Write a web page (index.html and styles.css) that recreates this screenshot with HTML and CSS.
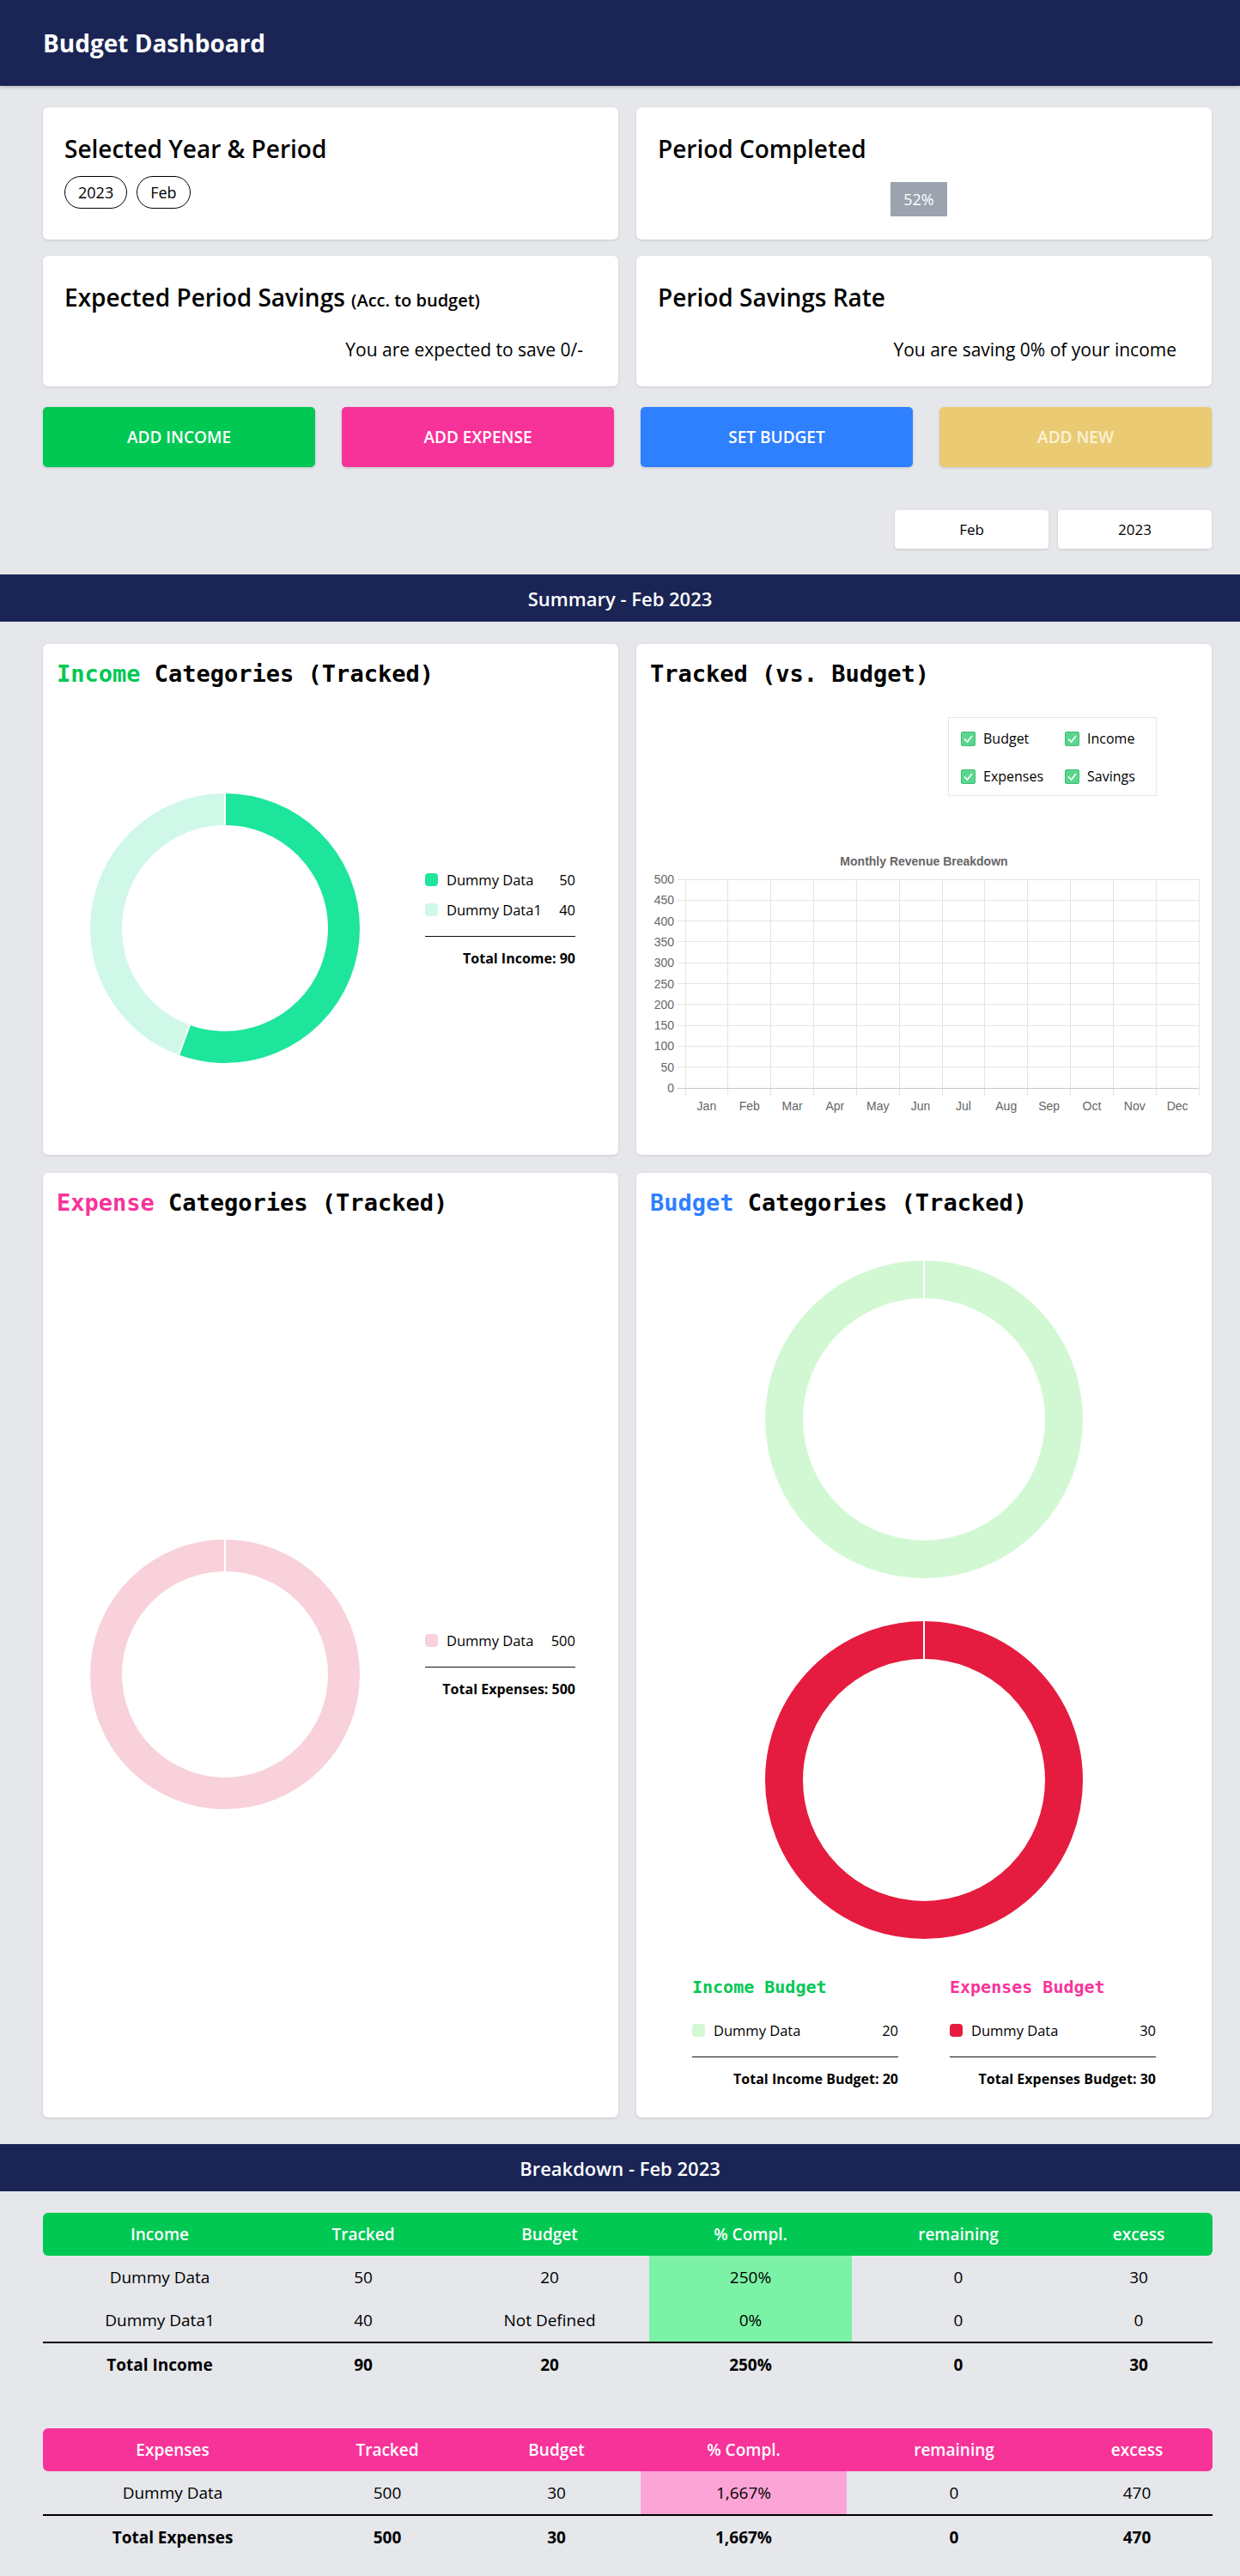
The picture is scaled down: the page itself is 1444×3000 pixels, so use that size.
FILE: index.html
```html
<!DOCTYPE html>
<html lang="en">
<head>
<meta charset="utf-8">
<title>Budget Dashboard</title>
<link rel="stylesheet" href="styles.css">
</head>
<body>
<header class="topbar"><h1>Budget Dashboard</h1></header>

<section class="overview">
  <div class="stat-grid">
    <div class="card stat stat-top">
      <h2 class="stat-title">Selected Year &amp; Period</h2>
      <div class="pills"><span class="pill">2023</span><span class="pill">Feb</span></div>
    </div>
    <div class="card stat stat-badge">
      <h2 class="stat-title">Period Completed</h2>
      <div class="badge-row"><span class="badge">52%</span></div>
    </div>
    <div class="card stat stat-bottom">
      <h2 class="stat-title">Expected Period Savings <small>(Acc. to budget)</small></h2>
      <p class="stat-text">You are expected to save 0/-</p>
    </div>
    <div class="card stat stat-bottom">
      <h2 class="stat-title">Period Savings Rate</h2>
      <p class="stat-text">You are saving 0% of your income</p>
    </div>
  </div>

  <div class="actions">
    <button class="btn btn-income">ADD INCOME</button>
    <button class="btn btn-expense">ADD EXPENSE</button>
    <button class="btn btn-budget">SET BUDGET</button>
    <button class="btn btn-new">ADD NEW</button>
  </div>

  <div class="period-select">
    <div class="select">Feb</div>
    <div class="select">2023</div>
  </div>
</section>

<div class="section-bar">Summary - Feb 2023</div>

<section class="charts">
  <div class="card chart-card">
    <h2 class="chart-title"><span class="c-income">Income</span> Categories (Tracked)</h2>
    <div class="donut-body">
      <svg class="donut" width="314" height="314" viewBox="0 0 314 314">
        <circle cx="157" cy="157" r="138.5" fill="none" stroke="#1de59b" stroke-width="37" stroke-dasharray="483.46 870.22" transform="rotate(-90 157 157)"/>
        <circle cx="157" cy="157" r="138.5" fill="none" stroke="#d0f8e9" stroke-width="37" stroke-dasharray="386.76 870.22" stroke-dashoffset="-483.46" transform="rotate(-90 157 157)"/>
        <line x1="157" y1="0" x2="157" y2="37" stroke="#fff" stroke-width="2"/>
        <line x1="115.96" y1="269.76" x2="103.3" y2="304.53" stroke="#fff" stroke-width="2"/>
      </svg>
      <div class="legend side-legend">
        <div class="legend-row"><span class="swatch sw-dark"></span><span class="legend-label">Dummy Data</span><span>50</span></div>
        <div class="legend-row"><span class="swatch sw-light"></span><span class="legend-label">Dummy Data1</span><span>40</span></div>
        <div class="legend-line"></div>
        <div class="legend-total">Total Income: 90</div>
      </div>
    </div>
  </div>

  <div class="card chart-card tracked-card">
    <h2 class="chart-title">Tracked (vs. Budget)</h2>
    <div class="check-legend">
      <div class="check-item"><span class="cb"><svg width="17" height="17" viewBox="0 0 17 17"><polyline points="4,8.5 7.5,12 13,5" fill="none" stroke="#fff" stroke-width="1.6"/></svg></span>Budget</div>
      <div class="check-item"><span class="cb"><svg width="17" height="17" viewBox="0 0 17 17"><polyline points="4,8.5 7.5,12 13,5" fill="none" stroke="#fff" stroke-width="1.6"/></svg></span>Income</div>
      <div class="check-item"><span class="cb"><svg width="17" height="17" viewBox="0 0 17 17"><polyline points="4,8.5 7.5,12 13,5" fill="none" stroke="#fff" stroke-width="1.6"/></svg></span>Expenses</div>
      <div class="check-item"><span class="cb"><svg width="17" height="17" viewBox="0 0 17 17"><polyline points="4,8.5 7.5,12 13,5" fill="none" stroke="#fff" stroke-width="1.6"/></svg></span>Savings</div>
    </div>
    <svg class="line-chart" width="645" height="310" viewBox="0 0 645 310">
      <text class="ch-title" x="319" y="18" text-anchor="middle">Monthly Revenue Breakdown</text>
      <g stroke="#e4e4e4" stroke-width="1" shape-rendering="crispEdges">
        <line x1="32" y1="34" x2="639" y2="34"/>
        <line x1="32" y1="58.3" x2="639" y2="58.3"/>
        <line x1="32" y1="82.6" x2="639" y2="82.6"/>
        <line x1="32" y1="106.9" x2="639" y2="106.9"/>
        <line x1="32" y1="131.2" x2="639" y2="131.2"/>
        <line x1="32" y1="155.5" x2="639" y2="155.5"/>
        <line x1="32" y1="179.8" x2="639" y2="179.8"/>
        <line x1="32" y1="204.1" x2="639" y2="204.1"/>
        <line x1="32" y1="228.4" x2="639" y2="228.4"/>
        <line x1="32" y1="252.7" x2="639" y2="252.7"/>
        <line x1="41" y1="34" x2="41" y2="286"/>
        <line x1="90.83" y1="34" x2="90.83" y2="286"/>
        <line x1="140.67" y1="34" x2="140.67" y2="286"/>
        <line x1="190.5" y1="34" x2="190.5" y2="286"/>
        <line x1="240.33" y1="34" x2="240.33" y2="286"/>
        <line x1="290.17" y1="34" x2="290.17" y2="286"/>
        <line x1="340" y1="34" x2="340" y2="286"/>
        <line x1="389.83" y1="34" x2="389.83" y2="286"/>
        <line x1="439.67" y1="34" x2="439.67" y2="286"/>
        <line x1="489.5" y1="34" x2="489.5" y2="286"/>
        <line x1="539.33" y1="34" x2="539.33" y2="286"/>
        <line x1="589.17" y1="34" x2="589.17" y2="286"/>
        <line x1="639" y1="34" x2="639" y2="286"/>
      </g>
      <line x1="32" y1="277" x2="639" y2="277" stroke="#c8c8c8" stroke-width="1" shape-rendering="crispEdges"/>
      <g class="ch-tick" text-anchor="end">
        <text x="28" y="39">500</text>
        <text x="28" y="63.3">450</text>
        <text x="28" y="87.6">400</text>
        <text x="28" y="111.9">350</text>
        <text x="28" y="136.2">300</text>
        <text x="28" y="160.5">250</text>
        <text x="28" y="184.8">200</text>
        <text x="28" y="209.1">150</text>
        <text x="28" y="233.4">100</text>
        <text x="28" y="257.7">50</text>
        <text x="28" y="282">0</text>
      </g>
      <g class="ch-tick" text-anchor="middle">
        <text x="65.9" y="303">Jan</text>
        <text x="115.75" y="303">Feb</text>
        <text x="165.6" y="303">Mar</text>
        <text x="215.4" y="303">Apr</text>
        <text x="265.25" y="303">May</text>
        <text x="315.1" y="303">Jun</text>
        <text x="364.9" y="303">Jul</text>
        <text x="414.75" y="303">Aug</text>
        <text x="464.6" y="303">Sep</text>
        <text x="514.4" y="303">Oct</text>
        <text x="564.25" y="303">Nov</text>
        <text x="614.1" y="303">Dec</text>
      </g>
    </svg>
  </div>

  <div class="card chart-card">
    <h2 class="chart-title"><span class="c-expense">Expense</span> Categories (Tracked)</h2>
    <div class="donut-body">
      <svg class="donut" width="314" height="314" viewBox="0 0 314 314">
        <circle cx="157" cy="157" r="138.5" fill="none" stroke="#f9d1db" stroke-width="37"/>
        <line x1="157" y1="0" x2="157" y2="37" stroke="#fff" stroke-width="2"/>
      </svg>
      <div class="legend side-legend">
        <div class="legend-row"><span class="swatch sw-pink"></span><span class="legend-label">Dummy Data</span><span>500</span></div>
        <div class="legend-line"></div>
        <div class="legend-total">Total Expenses: 500</div>
      </div>
    </div>
  </div>

  <div class="card chart-card budget-card">
    <h2 class="chart-title"><span class="c-budget">Budget</span> Categories (Tracked)</h2>
    <div class="budget-donuts">
      <svg class="donut" width="370" height="370" viewBox="0 0 370 370">
        <circle cx="185" cy="185" r="163" fill="none" stroke="#d2f8d3" stroke-width="44"/>
        <line x1="185" y1="0" x2="185" y2="44" stroke="#fff" stroke-width="2"/>
      </svg>
      <svg class="donut" width="370" height="370" viewBox="0 0 370 370">
        <circle cx="185" cy="185" r="163" fill="none" stroke="#e51b3f" stroke-width="44"/>
        <line x1="185" y1="0" x2="185" y2="44" stroke="#fff" stroke-width="2"/>
      </svg>
    </div>
    <div class="budget-legends">
      <div class="legend">
        <h3 class="legend-title c-income">Income Budget</h3>
        <div class="legend-row"><span class="swatch sw-mint"></span><span class="legend-label">Dummy Data</span><span>20</span></div>
        <div class="legend-line"></div>
        <div class="legend-total">Total Income Budget: 20</div>
      </div>
      <div class="legend">
        <h3 class="legend-title c-expense">Expenses Budget</h3>
        <div class="legend-row"><span class="swatch sw-red"></span><span class="legend-label">Dummy Data</span><span>30</span></div>
        <div class="legend-line"></div>
        <div class="legend-total">Total Expenses Budget: 30</div>
      </div>
    </div>
  </div>
</section>

<div class="section-bar">Breakdown - Feb 2023</div>

<section class="tables">
  <table class="tbl tbl-income">
    <colgroup><col class="c1"><col class="c2"><col class="c3"><col class="c4"><col class="c5"><col class="c6"></colgroup>
    <thead>
      <tr><th>Income</th><th>Tracked</th><th>Budget</th><th>% Compl.</th><th>remaining</th><th>excess</th></tr>
    </thead>
    <tbody>
      <tr><td>Dummy Data</td><td>50</td><td>20</td><td class="hl">250%</td><td>0</td><td>30</td></tr>
      <tr><td>Dummy Data1</td><td>40</td><td>Not Defined</td><td class="hl">0%</td><td>0</td><td>0</td></tr>
      <tr class="total"><td>Total Income</td><td>90</td><td>20</td><td>250%</td><td>0</td><td>30</td></tr>
    </tbody>
  </table>

  <table class="tbl tbl-expense">
    <colgroup><col class="c1"><col class="c2"><col class="c3"><col class="c4"><col class="c5"><col class="c6"></colgroup>
    <thead>
      <tr><th>Expenses</th><th>Tracked</th><th>Budget</th><th>% Compl.</th><th>remaining</th><th>excess</th></tr>
    </thead>
    <tbody>
      <tr><td>Dummy Data</td><td>500</td><td>30</td><td class="hl">1,667%</td><td>0</td><td>470</td></tr>
      <tr class="total"><td>Total Expenses</td><td>500</td><td>30</td><td>1,667%</td><td>0</td><td>470</td></tr>
    </tbody>
  </table>
</section>
</body>
</html>
```

FILE: styles.css
```css
* { box-sizing: border-box; }
html, body { margin: 0; padding: 0; }
body {
  background: #e5e7eb;
  font-family: "Open Sans", "Noto Sans", sans-serif;
  color: #000;
}

/* header */
.topbar {
  height: 100px;
  background: #1a2555;
  display: flex;
  align-items: center;
  padding-left: 50px;
  box-shadow: 0 2px 4px rgba(0, 0, 0, 0.18);
}
.topbar h1 {
  margin: 0;
  color: #fff;
  font-size: 28px;
  font-weight: 700;
}

/* overview */
.overview { padding: 25px 33px 30px 50px; }
.stat-grid {
  display: grid;
  grid-template-columns: minmax(0, 1fr) minmax(0, 1fr);
  gap: 19px 21px;
  align-items: start;
}
.card {
  background: #fff;
  border-radius: 6px;
  box-shadow: 0 1px 3px rgba(0, 0, 0, 0.13);
}
.stat { padding: 30px 25px 0; }
.stat-top { padding-bottom: 36px; }
.stat-badge { padding-bottom: 27px; height: 154px; }
.stat-bottom { padding-bottom: 29px; height: 152px; }
.stat-title {
  margin: 0;
  font-size: 28px;
  line-height: 36px;
  height: 36px;
  font-weight: 600;
}
.stat-title small { font-size: 20px; font-weight: 600; line-height: 1; }
.pills { display: flex; gap: 11px; margin-top: 14px; }
.pill {
  height: 38px;
  padding: 0 15px;
  border: 1px solid #000;
  border-radius: 19px;
  display: flex;
  align-items: center;
  font-size: 18px;
}
.badge-row { display: flex; justify-content: center; margin-top: 21px; padding-right: 12px; }
.badge {
  height: 40px;
  padding: 0 15px;
  background: #9ca3af;
  color: #fff;
  display: flex;
  align-items: center;
  font-size: 18px;
}
.stat-text {
  margin: 29px 0 0;
  padding-right: 16px;
  text-align: right;
  font-size: 21px;
  line-height: 28px;
}

.actions {
  display: grid;
  grid-template-columns: repeat(4, minmax(0, 1fr));
  gap: 31px;
  margin-top: 24px;
}
.btn {
  height: 70px;
  border: none;
  border-radius: 5px;
  font-family: inherit;
  font-size: 19px;
  font-weight: 600;
  color: #fff;
  box-shadow: 0 1px 3px rgba(0, 0, 0, 0.15);
}
.btn-income { background: #00c853; }
.btn-expense { background: #f7339a; }
.btn-budget { background: #2f80ff; }
.btn-new { background: #eacb74; color: #fbf2d6; }

.period-select {
  display: flex;
  justify-content: flex-end;
  gap: 11px;
  margin-top: 50px;
}
.select {
  width: 179px;
  height: 45px;
  background: #fff;
  border-radius: 4px;
  box-shadow: 0 1px 3px rgba(0, 0, 0, 0.13);
  display: flex;
  align-items: center;
  justify-content: center;
  font-size: 17px;
}

.section-bar {
  height: 55px;
  background: #1a2555;
  color: #fff;
  display: flex;
  align-items: center;
  justify-content: center;
  font-size: 22px;
  font-weight: 600;
}

/* charts */
.charts {
  padding: 26px 33px 31px 50px;
  display: grid;
  grid-template-columns: minmax(0, 1fr) minmax(0, 1fr);
  gap: 21px 21px;
}
.chart-card {
  min-width: 0;
  padding: 16px 16px 0;
  display: flex;
  flex-direction: column;
}
.chart-title {
  margin: 0;
  font-family: "DejaVu Sans Mono", "Liberation Mono", monospace;
  font-size: 27px;
  line-height: 38px;
  font-weight: 700;
}
.c-income { color: #00c853; }
.c-expense { color: #f7339a; }
.c-budget { color: #2f80ff; }

.donut-body {
  flex: 1;
  display: flex;
  align-items: center;
  margin-top: 13px;
  padding-left: 39px;
  gap: 76px;
}
.donut { display: block; flex: none; }

.legend { width: 175px; font-size: 16.5px; }
.side-legend { margin-bottom: 28px; }
.legend-row {
  display: flex;
  align-items: center;
  height: 35px;
}
.swatch {
  width: 15px;
  height: 15px;
  border-radius: 4px;
  margin-right: 10px;
  flex: none;
}
.sw-dark { background: #1de59b; }
.sw-light { background: #d0f8e9; }
.sw-pink { background: #f9d1db; }
.sw-mint { background: #d2f8d3; }
.sw-red { background: #e51b3f; }
.legend-label { flex: 1; }
.legend-line { border-top: 1px solid #111; margin-top: 13px; }
.legend-total {
  margin-top: 13px;
  line-height: 24px;
  text-align: right;
  font-weight: 700;
  font-size: 16px;
}

.tracked-card { padding-bottom: 45px; }
.check-legend {
  margin: 31px 48px 0 auto;
  width: 243px;
  border: 1px solid #e2e8f0;
  padding: 2px 0 0 14px;
  display: grid;
  grid-template-columns: 121px 1fr;
  grid-auto-rows: 44px;
}
.check-item {
  display: flex;
  align-items: center;
  font-size: 16px;
  font-weight: 500;
}
.cb {
  width: 17px;
  height: 17px;
  background: #5bd68e;
  border: 1px solid #3fbf74;
  border-radius: 2px;
  margin-right: 9px;
  display: flex;
  align-items: center;
  justify-content: center;
  overflow: hidden;
}
.cb svg { display: block; flex: none; }
.line-chart { display: block; flex: none; margin-top: 63px; overflow: visible; }
.ch-title {
  font-family: "Liberation Sans", Arial, sans-serif;
  font-size: 14px;
  font-weight: 700;
  fill: #666;
}
.ch-tick text {
  font-family: "Liberation Sans", Arial, sans-serif;
  font-size: 14px;
  fill: #666;
}

.budget-card { padding-bottom: 33px; }
.budget-donuts {
  display: flex;
  flex-direction: column;
  align-items: center;
  gap: 50px;
  margin-top: 48px;
}
.budget-legends {
  display: flex;
  justify-content: center;
  gap: 60px;
  margin-top: 43px;
}
.budget-legends .legend { width: 240px; }
.legend-title {
  margin: 0 0 20px;
  font-family: "DejaVu Sans Mono", "Liberation Mono", monospace;
  font-size: 20px;
  line-height: 26px;
  font-weight: 700;
}

/* tables */
.tables { padding: 25px 32px 20px 50px; }
.tbl {
  width: 100%;
  table-layout: fixed;
  border-collapse: separate;
  border-spacing: 0;
}
.tbl + .tbl { margin-top: 49px; }
.tbl th {
  height: 50px;
  padding: 0;
  color: #fff;
  font-size: 19px;
  font-weight: 600;
  text-align: center;
}
.tbl th:first-child { border-radius: 6px 0 0 6px; }
.tbl th:last-child { border-radius: 0 6px 6px 0; }
.tbl td {
  height: 50px;
  padding: 0;
  font-size: 19px;
  text-align: center;
}
.tbl .total td {
  height: 52px;
  border-top: 2px solid #000;
  font-weight: 700;
}
.tbl-income th { background: #00c853; }
.tbl-income .hl { background: #7cf2a6; }
.tbl-expense th { background: #f7339a; }
.tbl-expense .hl { background: #fda4d6; }

.tbl-income .c1 { width: 272px; }
.tbl-income .c2 { width: 202px; }
.tbl-income .c3 { width: 232px; }
.tbl-income .c4 { width: 236px; }
.tbl-income .c5 { width: 248px; }
.tbl-income .c6 { width: 172px; }
.tbl-expense .c1 { width: 302px; }
.tbl-expense .c2 { width: 198px; }
.tbl-expense .c3 { width: 196px; }
.tbl-expense .c4 { width: 240px; }
.tbl-expense .c5 { width: 250px; }
.tbl-expense .c6 { width: 176px; }
```
